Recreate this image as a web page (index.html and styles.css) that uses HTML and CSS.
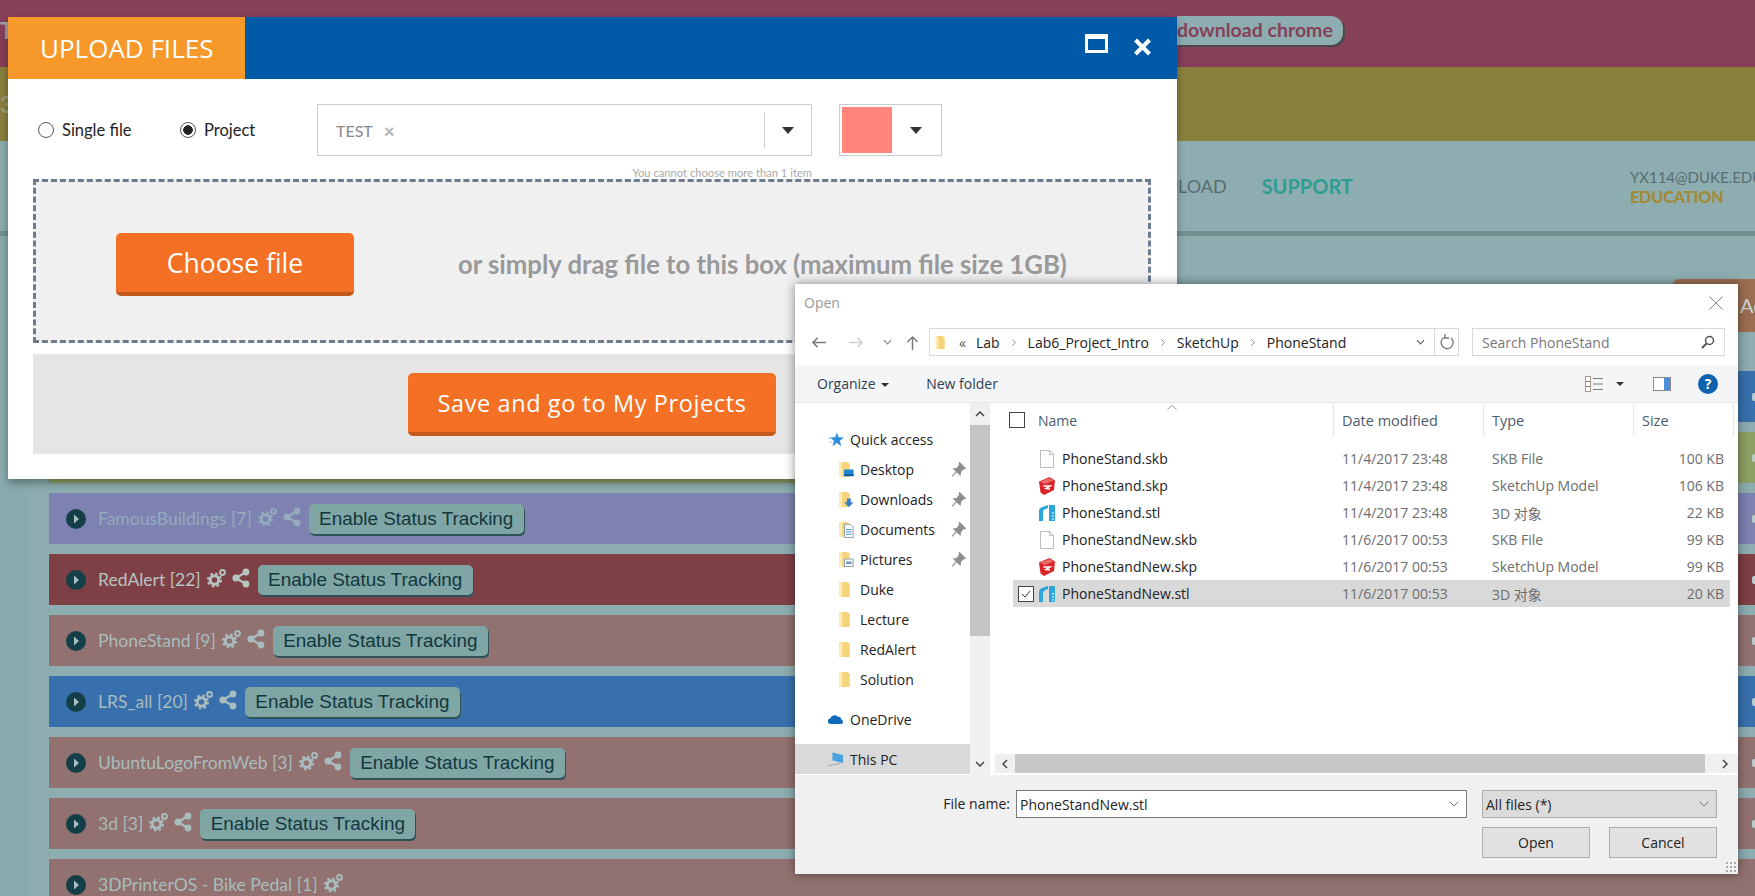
FILE: index.html
```html
<!DOCTYPE html>
<html lang="en">
<head>
<meta charset="UTF-8" />
<title>Upload Files</title>
<link rel="stylesheet" href="styles.css">
</head>
<body>

<svg class="sprites" width="0" height="0">
  <symbol id="i-play" viewBox="0 0 20 20"><circle cx="10" cy="10" r="10" fill="#143f48"/><path d="M8 5.500l5 4.500-5 4.500z" fill="#a9c0c2"/></symbol>
  <symbol id="i-gear" viewBox="0 0 20 20"><g fill="none" stroke="currentColor"><circle cx="7.500" cy="12" r="4.300" stroke-width="3"/><circle cx="7.500" cy="12" r="6.500" stroke-width="2" stroke-dasharray="2.600 2.500"/><circle cx="15.500" cy="4.500" r="2.400" stroke-width="2"/></g></symbol>
  <symbol id="i-share" viewBox="0 0 18 20"><path d="M14 4L4 10l10 6" fill="none" stroke="currentColor" stroke-width="2.400"/><circle cx="14" cy="4" r="3.400" fill="currentColor"/><circle cx="4" cy="10" r="3.600" fill="currentColor"/><circle cx="14" cy="16" r="3.400" fill="currentColor"/></symbol>
  <symbol id="i-folder" viewBox="0 0 16 18"><path d="M1 1h8l3 2v14H1z" fill="#f6d47c"/><path d="M1 1h3v16H1z" fill="#fdeab4"/></symbol>
  <symbol id="i-desktop" viewBox="0 0 16 18"><use href="#i-folder"/><rect x="6" y="9" width="10" height="7" fill="#1a86d0"/><rect x="6" y="14" width="10" height="2" fill="#0e5e9e"/></symbol>
  <symbol id="i-downloads" viewBox="0 0 16 18"><use href="#i-folder"/><path d="M9 8h4v4h3l-5 5-5-5h3z" fill="#2f80c8"/></symbol>
  <symbol id="i-documents" viewBox="0 0 16 18"><use href="#i-folder"/><path d="M6.500 3.500h6l3 3v11h-9z" fill="#fff" stroke="#8a9aa8"/><path d="M8 9h6M8 11.500h6M8 14h6" stroke="#3b8ed0"/></symbol>
  <symbol id="i-pictures" viewBox="0 0 16 18"><use href="#i-folder"/><rect x="6.500" y="8.500" width="9" height="8" fill="#fff" stroke="#8a9aa8"/><rect x="8" y="11" width="6" height="3" fill="#7a9cc0"/></symbol>
  <symbol id="i-file" viewBox="0 0 16 18"><path d="M1.500.5h9l4 4v13h-13z" fill="#fff" stroke="#bcbcbc"/><path d="M10.500.5v4h4" fill="none" stroke="#bcbcbc"/></symbol>
  <symbol id="i-skp" viewBox="0 0 16 18"><path d="M0 4.500L10.500 0 16 3.500 15 13 5 18 1.500 15.500z" fill="#d9252a"/><path d="M1 4.500L10.500 1l4 2.500-9 3.500z" fill="#ee6a68"/><path d="M4.500 9H11L7 11.500l4 .5" fill="none" stroke="#fff" stroke-width="1.500"/></symbol>
  <symbol id="i-stl" viewBox="0 0 16 18"><path d="M0 17V7Q0 4 3 3l6-2v3L5.500 5.500Q4 6 4 8v9z" fill="#2aa7de"/><path d="M10 1h5q1 0 1 1v15h-6z" fill="#2aa7de"/><path d="M13 9h2M13 12h2M13 15h2" stroke="#fff"/></symbol>
  <symbol id="i-pin" viewBox="0 0 14 14"><path d="M8 .5l5.500 5.500-2 .5-2.500 2.500-.5 3L2.500 6.500l3-.5 2-2.500zM5 9l-4 4.500" fill="#8e8e8e" stroke="#8e8e8e"/></symbol>
  <symbol id="i-chev" viewBox="0 0 8 10"><path d="M2 1l4 4-4 4" fill="none" stroke="#8a8a8a" stroke-width="1.300"/></symbol>
</svg>

<div class="page">
  <div class="band-top">
    <span class="band-letter">T</span>
    <a class="pill">download chrome</a>
  </div>
  <div class="band-olive"><span class="band-letter">3</span></div>
  <nav class="site-nav">
    <a>UPLOAD</a>
    <a class="nav-support">SUPPORT</a>
    <div class="nav-user">
      <div>YX114@DUKE.EDU</div>
      <div class="nav-plan">EDUCATION</div>
    </div>
  </nav>
  <div class="content">
    <div class="side"></div>
    <div class="projects">
      <div class="projects-head"><a class="add-btn">Add</a></div>
      <div class="row row-blue"><span class="row-end"></span></div>
      <div class="row row-green"><span class="row-end"></span></div>
      <div class="row row-purple">
        <svg class="ic-play"><use href="#i-play"/></svg>
        <span class="row-name">FamousBuildings [7]</span>
        <svg class="ic-gear"><use href="#i-gear"/></svg>
        <svg class="ic-share"><use href="#i-share"/></svg>
        <button class="track">Enable Status Tracking</button>
        <span class="row-end"></span>
      </div>
      <div class="row row-red">
        <svg class="ic-play"><use href="#i-play"/></svg>
        <span class="row-name">RedAlert [22]</span>
        <svg class="ic-gear"><use href="#i-gear"/></svg>
        <svg class="ic-share"><use href="#i-share"/></svg>
        <button class="track">Enable Status Tracking</button>
        <span class="row-end"></span>
      </div>
      <div class="row row-brown">
        <svg class="ic-play"><use href="#i-play"/></svg>
        <span class="row-name">PhoneStand [9]</span>
        <svg class="ic-gear"><use href="#i-gear"/></svg>
        <svg class="ic-share"><use href="#i-share"/></svg>
        <button class="track">Enable Status Tracking</button>
        <span class="row-end"></span>
      </div>
      <div class="row row-blue">
        <svg class="ic-play"><use href="#i-play"/></svg>
        <span class="row-name">LRS_all [20]</span>
        <svg class="ic-gear"><use href="#i-gear"/></svg>
        <svg class="ic-share"><use href="#i-share"/></svg>
        <button class="track">Enable Status Tracking</button>
        <span class="row-end"></span>
      </div>
      <div class="row row-brown">
        <svg class="ic-play"><use href="#i-play"/></svg>
        <span class="row-name">UbuntuLogoFromWeb [3]</span>
        <svg class="ic-gear"><use href="#i-gear"/></svg>
        <svg class="ic-share"><use href="#i-share"/></svg>
        <button class="track">Enable Status Tracking</button>
        <span class="row-end"></span>
      </div>
      <div class="row row-brown">
        <svg class="ic-play"><use href="#i-play"/></svg>
        <span class="row-name">3d [3]</span>
        <svg class="ic-gear"><use href="#i-gear"/></svg>
        <svg class="ic-share"><use href="#i-share"/></svg>
        <button class="track">Enable Status Tracking</button>
        <span class="row-end"></span>
      </div>
      <div class="row row-brown">
        <svg class="ic-play"><use href="#i-play"/></svg>
        <span class="row-name">3DPrinterOS - Bike Pedal [1]</span>
        <svg class="ic-gear"><use href="#i-gear"/></svg>
      </div>
    </div>
  </div>
</div>

<!-- upload modal -->
<section class="modal">
  <header class="modal-head">
    <h1 class="modal-title">UPLOAD FILES</h1>
    <div class="modal-tools">
      <span class="tool-max"></span>
      <svg class="tool-close" viewBox="0 0 19 18"><path d="M2.500 2l14 14M16.500 2l-14 14" stroke="#fff" stroke-width="4"/></svg>
    </div>
  </header>
  <div class="modal-body">
    <div class="form-row">
      <label class="radio-label"><input class="radio" type="radio" name="kind">Single file</label>
      <label class="radio-label label-project"><input class="radio" type="radio" name="kind" checked>Project</label>
      <div class="picker">
        <span class="picker-value">TEST</span>
        <span class="picker-x">×</span>
        <span class="picker-caret"><i class="caret"></i></span>
      </div>
      <div class="color-pick">
        <span class="swatch"></span>
        <i class="caret"></i>
      </div>
    </div>
    <div class="hint">You cannot choose more than 1 item</div>
    <div class="dropzone">
      <button class="btn-orange btn-choose">Choose file</button>
      <span class="drop-text">or simply drag file to this box (maximum file size 1GB)</span>
    </div>
    <div class="modal-foot">
      <button class="btn-orange btn-save">Save and go to My Projects</button>
    </div>
  </div>
</section>

<!-- windows file dialog -->
<section class="dialog">
  <div class="dlg-title">
    <span>Open</span>
    <svg class="dlg-close" viewBox="0 0 14 14"><path d="M.5.5l13 13M13.500.5l-13 13" stroke="#8a8a8a" fill="none"/></svg>
  </div>
  <div class="dlg-address">
    <svg class="addr-nav" viewBox="0 0 16 14"><path d="M16 7H2M7 2L2 7l5 5" fill="none" stroke="#7a7a7a" stroke-width="1.600"/></svg>
    <svg class="addr-nav addr-fwd" viewBox="0 0 16 14"><path d="M0 7h14M9 2l5 5-5 5" fill="none" stroke="#cfcfcf" stroke-width="1.600"/></svg>
    <svg class="addr-down" viewBox="0 0 10 6"><path d="M1 1l4 4 4-4" fill="none" stroke="#8a8a8a" stroke-width="1.300"/></svg>
    <svg class="addr-up" viewBox="0 0 14 16"><path d="M7 16V2M1.500 7.500L7 2l5.500 5.500" fill="none" stroke="#7a7a7a" stroke-width="1.600"/></svg>
    <div class="addr-box">
      <svg class="addr-folder"><use href="#i-folder"/></svg>
      <span class="crumb-more">«</span>
      <span>Lab</span><svg class="chev"><use href="#i-chev"/></svg>
      <span>Lab6_Project_Intro</span><svg class="chev"><use href="#i-chev"/></svg>
      <span>SketchUp</span><svg class="chev"><use href="#i-chev"/></svg>
      <span>PhoneStand</span>
      <svg class="addr-drop" viewBox="0 0 10 6"><path d="M1 1l4 4 4-4" fill="none" stroke="#666" stroke-width="1.300"/></svg>
      <span class="addr-refresh">
        <svg viewBox="0 0 14 16" width="14" height="16"><path d="M5 3a6 6 0 1 0 6 1M5 0v4h4" fill="none" stroke="#777" stroke-width="1.300"/></svg>
      </span>
    </div>
    <div class="search-box">
      <span>Search PhoneStand</span>
      <svg viewBox="0 0 14 14" width="14" height="14"><circle cx="8.500" cy="5.500" r="4" fill="none" stroke="#555" stroke-width="1.500"/><path d="M5.500 8.500L1 13" stroke="#555" stroke-width="2"/></svg>
    </div>
  </div>
  <div class="dlg-toolbar">
    <span class="tb-item">Organize <i class="mini-caret"></i></span>
    <span class="tb-item tb-new">New folder</span>
    <svg class="tb-views" viewBox="0 0 18 16"><rect x=".5" y=".5" width="5" height="15" fill="#fff" stroke="#a89a88"/><path d="M1 5.500h4M1 10.500h4M8 2.500h10M8 8h10M8 13.500h10" stroke="#7b7b7b"/></svg>
    <i class="mini-caret tb-caret"></i>
    <svg class="tb-pane" viewBox="0 0 18 14"><rect x=".5" y=".5" width="17" height="13" fill="#fff" stroke="#8c8c8c"/><rect x="11" y="1" width="6" height="12" fill="#4a90d9"/></svg>
    <span class="tb-help">?</span>
  </div>
  <div class="dlg-main">
    <ul class="tree">
      <li class="tree-top"><svg class="tree-ic" viewBox="0 0 18 16"><path d="M10 0l2 5.500 6 .3-4.700 3.700L15 15.500 10 12l-5 3.500 1.700-6L2 5.800l6-.3z" fill="#2f8fdc"/><path d="M0 7h5M1 11h4" stroke="#9cc8ec"/></svg>Quick access</li>
      <li><svg class="tree-ic"><use href="#i-desktop"/></svg>Desktop<svg class="pin"><use href="#i-pin"/></svg></li>
      <li><svg class="tree-ic"><use href="#i-downloads"/></svg>Downloads<svg class="pin"><use href="#i-pin"/></svg></li>
      <li><svg class="tree-ic"><use href="#i-documents"/></svg>Documents<svg class="pin"><use href="#i-pin"/></svg></li>
      <li><svg class="tree-ic"><use href="#i-pictures"/></svg>Pictures<svg class="pin"><use href="#i-pin"/></svg></li>
      <li><svg class="tree-ic"><use href="#i-folder"/></svg>Duke</li>
      <li><svg class="tree-ic"><use href="#i-folder"/></svg>Lecture</li>
      <li><svg class="tree-ic"><use href="#i-folder"/></svg>RedAlert</li>
      <li><svg class="tree-ic"><use href="#i-folder"/></svg>Solution</li>
      <li class="tree-top tree-gap"><svg class="tree-ic" viewBox="0 0 18 12"><path d="M3 11a3 3 0 0 1-.500-6A5 5 0 0 1 11 3a3.500 3.500 0 0 1 4 3 2.600 2.600 0 0 1 0 5z" fill="#0f6cbd"/></svg>OneDrive</li>
      <li class="tree-top tree-gap tree-sel"><svg class="tree-ic" viewBox="0 0 18 16"><path d="M5 0l12 3v9L5 9z" fill="#4aa3e0"/><path d="M0 15l14-2.500" stroke="#999"/></svg>This PC</li>
    </ul>
    <div class="vscroll">
      <svg class="sb-arrow" viewBox="0 0 10 6"><path d="M1 5l4-4 4 4" fill="none" stroke="#444" stroke-width="1.500"/></svg>
      <div class="vscroll-thumb"></div>
      <svg class="sb-arrow sb-bottom" viewBox="0 0 10 6"><path d="M1 1l4 4 4-4" fill="none" stroke="#444" stroke-width="1.500"/></svg>
    </div>
    <div class="files">
      <div class="files-head">
        <div class="col-name"><span class="box"></span>Name<svg class="sort-up" viewBox="0 0 10 5"><path d="M.5 4.500L5 .5l4.500 4" fill="none" stroke="#999"/></svg></div>
        <div>Date modified</div>
        <div>Type</div>
        <div>Size</div>
      </div>
      <div class="file-list">
        <div class="file"><div class="file-name"><span class="slot"></span><svg class="file-ic"><use href="#i-file"/></svg>PhoneStand.skb</div><div>11/4/2017 23:48</div><div>SKB File</div><div class="file-size">100 KB</div></div>
        <div class="file"><div class="file-name"><span class="slot"></span><svg class="file-ic"><use href="#i-skp"/></svg>PhoneStand.skp</div><div>11/4/2017 23:48</div><div>SketchUp Model</div><div class="file-size">106 KB</div></div>
        <div class="file"><div class="file-name"><span class="slot"></span><svg class="file-ic"><use href="#i-stl"/></svg>PhoneStand.stl</div><div>11/4/2017 23:48</div><div>3D 对象</div><div class="file-size">22 KB</div></div>
        <div class="file"><div class="file-name"><span class="slot"></span><svg class="file-ic"><use href="#i-file"/></svg>PhoneStandNew.skb</div><div>11/6/2017 00:53</div><div>SKB File</div><div class="file-size">99 KB</div></div>
        <div class="file"><div class="file-name"><span class="slot"></span><svg class="file-ic"><use href="#i-skp"/></svg>PhoneStandNew.skp</div><div>11/6/2017 00:53</div><div>SketchUp Model</div><div class="file-size">99 KB</div></div>
        <div class="file file-sel"><div class="file-name"><span class="slot box"><svg viewBox="0 0 14 14" width="14" height="14"><path d="M3 7l3 3 5-6" fill="none" stroke="#333"/></svg></span><svg class="file-ic"><use href="#i-stl"/></svg>PhoneStandNew.stl</div><div>11/6/2017 00:53</div><div>3D 对象</div><div class="file-size">20 KB</div></div>
      </div>
      <div class="hscroll">
        <svg class="hs-arrow" viewBox="0 0 6 10"><path d="M5 1L1 5l4 4" fill="none" stroke="#444" stroke-width="1.500"/></svg>
        <div class="hscroll-thumb"></div>
        <svg class="hs-arrow hs-right" viewBox="0 0 6 10"><path d="M1 1l4 4-4 4" fill="none" stroke="#444" stroke-width="1.500"/></svg>
      </div>
    </div>
  </div>
  <div class="dlg-foot">
    <label class="fn-label">File name:</label>
    <div class="fn-input">PhoneStandNew.stl<svg viewBox="0 0 10 6" width="10" height="6"><path d="M.5.5L5 5 9.500.5" fill="none" stroke="#777"/></svg></div>
    <div class="fn-type">All files (*)<svg viewBox="0 0 10 6" width="10" height="6"><path d="M.5.5L5 5 9.500.5" fill="none" stroke="#777"/></svg></div>
    <div class="fn-btns">
      <button class="win-btn">Open</button>
      <button class="win-btn">Cancel</button>
    </div>
    <span class="grip"></span>
  </div>
</section>

</body>
</html>
```

FILE: styles.css
```css
html, body {
  margin: 0;
  height: 896px;
  overflow: hidden;
}
body {
  font-family: Lato, 'Open Sans', sans-serif;
  background: #8dadb0;
  color: #333;
  position: relative;
  width: 1755px;
}
button {
  font-family: inherit;
  cursor: pointer;
}
.sprites {
  position: absolute;
}

/* dimmed page behind the modal */
.band-top {
  height: 67px;
  background: #864059;
  display: flex;
  align-items: flex-start;
}
.band-letter {
  font-size: 22px;
  font-weight: bold;
  color: #a5a5a5;
  line-height: 22px;
  margin-top: 20px;
  width: 12px;
  flex: none;
}
.pill {
  margin: 16px 0 0 1165px;
  width: 166px;
  height: 29px;
  line-height: 27px;
  text-align: right;
  padding-right: 11px;
  box-sizing: border-box;
  background: #8dadb0;
  color: #864059;
  font-size: 19.500px;
  font-weight: bold;
  border-radius: 0 12px 12px 0;
  box-shadow: 2px 2px 0 #4a4750;
  white-space: nowrap;
}
.band-olive {
  height: 74px;
  background: #8a803e;
  display: flex;
}
.band-olive .band-letter {
  color: #9c9c7a;
  margin-top: 27px;
}
.site-nav {
  height: 90px;
  border-bottom: 5px solid #72908f;
  display: flex;
  align-items: center;
  padding-left: 1154px;
  font-size: 18px;
  color: #5a6c70;
}
.nav-support {
  margin-left: 35px;
  color: #2f9d94;
  font-weight: bold;
  font-size: 20px;
}
.nav-user {
  margin-left: 277px;
  font-size: 15px;
  line-height: 20px;
  white-space: nowrap;
  margin-top: 2px;
}
.nav-plan {
  color: #a38a35;
  font-weight: 900;
  font-size: 16px;
}
.content {
  display: flex;
  height: 660px;
}
.side {
  width: 30px;
  background: #8aabae;
  flex: none;
}
.projects {
  flex: 1;
  padding: 43px 0 0 19px;
  min-width: 0;
}
.projects-head {
  height: 53px;
  margin-bottom: 39px;
  display: flex;
  justify-content: flex-end;
}
.add-btn {
  width: 83px;
  background: #9c6d50;
  color: #c9d4d2;
  font-size: 20px;
  line-height: 53px;
  border-radius: 8px 0 0 8px;
  padding-left: 68px;
  box-sizing: border-box;
  white-space: nowrap;
  overflow: hidden;
}
.row {
  height: 51px;
  margin-bottom: 10px;
  display: flex;
  align-items: center;
  padding-left: 17px;
  color: #a9bcbe;
}
.row-blue { background: #3870ad; }
.row-green { background: #8ea164; }
.row-purple { background: #7d82b0; color: #93abbd; }
.row-red { background: #7e3f45; color: #b6c4c2; }
.row-brown { background: #917270; }
.ic-play {
  width: 20px;
  height: 20px;
  flex: none;
}
.row-name {
  margin-left: 12px;
  font-size: 17.500px;
  white-space: nowrap;
}
.ic-gear {
  width: 20px;
  height: 20px;
  margin: -4px 0 0 6px;
  flex: none;
}
.ic-share {
  width: 18px;
  height: 20px;
  margin: -4px 0 0 5px;
  flex: none;
}
.track {
  margin: 1px 0 0 8px;
  width: 215px;
  height: 30px;
  padding: 0;
  border: none;
  border-radius: 5px;
  background: #7fa5a5;
  color: #12383e;
  font-family: 'Liberation Sans', sans-serif;
  font-size: 18.900px;
  box-shadow: 1px 2px 0 #2e5257;
  white-space: nowrap;
}
.row-end {
  margin-left: auto;
  width: 3px;
  height: 8px;
  background: #b9cccc;
  border-radius: 2px 0 0 2px;
}

/* upload modal */
.modal {
  position: absolute;
  left: 8px;
  top: 17px;
  width: 1169px;
  height: 462px;
  background: #fff;
  box-shadow: 0 4px 8px rgba(0, 0, 0, 0.35);
}
.modal-head {
  height: 62px;
  background: #005aa7;
  display: flex;
}
.modal-title {
  margin: 0;
  width: 237px;
  background: #f7982a;
  color: #fff;
  font-family: 'Open Sans', sans-serif;
  font-weight: 400;
  font-size: 26px;
  line-height: 62px;
  padding-left: 32px;
  box-sizing: border-box;
  white-space: nowrap;
}
.modal-tools {
  margin-left: auto;
  display: flex;
  align-items: flex-start;
  padding-right: 25px;
}
.tool-max {
  width: 23px;
  height: 19px;
  box-sizing: border-box;
  border: 3px solid #fff;
  border-top-width: 5px;
  margin-top: 17px;
}
.tool-close {
  width: 19px;
  height: 18px;
  margin: 21px 0 0 25px;
}
.modal-body {
  padding: 25px 26px 0 25px;
}
.form-row {
  height: 52px;
  display: flex;
  align-items: center;
}
.radio-label {
  display: flex;
  align-items: center;
  gap: 8px;
  margin-left: 5px;
  font-size: 16.500px;
  color: #222;
  margin-top: -1px;
  width: 93px;
  white-space: nowrap;
}
.label-project {
  margin-left: 49px;
  width: 73px;
}
.radio {
  appearance: none;
  margin: 0;
  width: 16px;
  height: 16px;
  border: 1px solid #555;
  border-radius: 50%;
  background: #fff;
  flex: none;
}
.radio:checked {
  background: radial-gradient(circle, #222 0 4.500px, #fff 5px);
}
.picker {
  margin-left: 64px;
  width: 495px;
  height: 52px;
  box-sizing: border-box;
  border: 1px solid #ccc;
  display: flex;
  align-items: center;
  padding-left: 18px;
  color: #888;
  font-size: 16px;
}
.picker-x {
  margin-left: 11px;
  color: #b5b5b5;
  font-weight: 900;
  font-size: 19px;
}
.picker-caret {
  margin-left: auto;
  width: 46px;
  height: 36px;
  border-left: 1px solid #ccc;
  display: flex;
  align-items: center;
  justify-content: center;
}
.caret {
  display: block;
  border-left: 6px solid transparent;
  border-right: 6px solid transparent;
  border-top: 7px solid #333;
}
.color-pick {
  margin-left: 27px;
  width: 103px;
  height: 52px;
  box-sizing: border-box;
  border: 1px solid #ccc;
  padding: 2px;
  display: flex;
  align-items: center;
}
.swatch {
  width: 50px;
  height: 46px;
  background: #ff857a;
  margin-right: 18px;
}
.hint {
  width: 779px;
  height: 23px;
  line-height: 33px;
  text-align: right;
  font-size: 11.200px;
  color: #aaa;
  white-space: nowrap;
}
.dropzone {
  height: 164px;
  box-sizing: border-box;
  border: 3px dashed #6d7b8f;
  background: #f0f0f1;
  display: flex;
  align-items: center;
  padding-left: 80px;
}
.btn-orange {
  height: 63px;
  border: none;
  border-bottom: 4px solid #c35a1d;
  border-radius: 5px;
  background: #f37024;
  color: #fff;
  font-family: 'Open Sans', sans-serif;
  padding: 2px 0 0;
}
.btn-choose {
  width: 238px;
  font-size: 26.500px;
  margin-top: 6px;
}
.drop-text {
  margin-left: 104px;
  font-size: 25.700px;
  font-weight: bold;
  color: #999;
  white-space: nowrap;
  margin-top: 5px;
}
.modal-foot {
  margin-top: 11px;
  height: 100px;
  background: #e5e5e6;
  display: flex;
  align-items: center;
  padding-left: 375px;
}
.btn-save {
  width: 368px;
  font-size: 23.500px;
  letter-spacing: 0.600px;
}

/* windows open dialog */
.dialog {
  position: absolute;
  left: 795px;
  top: 284px;
  width: 943px;
  height: 590px;
  background: #fff;
  box-shadow: 0 0 10px rgba(0, 0, 0, 0.45);
  font-family: 'Open Sans', 'Noto Sans CJK SC', sans-serif;
  font-size: 14px;
  color: #222;
  display: flex;
  flex-direction: column;
}
.dlg-title {
  height: 36px;
  flex: none;
  margin-bottom: 8px;
  display: flex;
  align-items: center;
  padding: 0 15px 0 9px;
  color: #999;
  font-size: 14px;
}
.dlg-close {
  margin-left: auto;
  width: 14px;
  height: 14px;
  margin-top: 2px;
}
.dlg-address {
  height: 28px;
  margin-bottom: 9px;
  flex: none;
  display: flex;
  align-items: center;
  padding-left: 16px;
}
.addr-nav {
  width: 15px;
  height: 13px;
  flex: none;
}
.addr-fwd {
  margin-left: 23px;
}
.addr-down {
  width: 9px;
  height: 6px;
  margin-left: 19px;
  flex: none;
}
.addr-up {
  width: 13px;
  height: 15px;
  margin-left: 14px;
  flex: none;
}
.addr-box {
  margin-left: 10px;
  width: 530px;
  height: 28px;
  box-sizing: border-box;
  border: 1px solid #d9d9d9;
  display: flex;
  align-items: center;
  padding-left: 5px;
  gap: 11px;
  white-space: nowrap;
  flex: none;
}
.addr-folder {
  width: 13px;
  height: 17px;
  flex: none;
}
.crumb-more {
  margin-right: -1px;
  color: #555;
}
.chev {
  width: 6px;
  height: 9px;
  flex: none;
}
.addr-drop {
  margin-left: auto;
  margin-right: -1px;
  width: 9px;
  height: 6px;
  flex: none;
}
.addr-refresh {
  width: 23px;
  height: 26px;
  border-left: 1px solid #d9d9d9;
  display: flex;
  align-items: center;
  justify-content: center;
  margin-left: -1px;
  flex: none;
}
.search-box {
  margin-left: 13px;
  width: 253px;
  height: 28px;
  box-sizing: border-box;
  border: 1px solid #d9d9d9;
  display: flex;
  align-items: center;
  justify-content: space-between;
  padding: 0 9px;
  color: #777;
  flex: none;
}
.dlg-toolbar {
  height: 38px;
  flex: none;
  background: #f3f5f7;
  border-bottom: 1px solid #e6e6e6;
  box-sizing: border-box;
  display: flex;
  align-items: center;
  padding-left: 22px;
  color: #2f3f52;
}
.tb-new {
  margin-left: 37px;
}
.mini-caret {
  display: inline-block;
  border-left: 4px solid transparent;
  border-right: 4px solid transparent;
  border-top: 4px solid #333;
  vertical-align: middle;
  margin-left: 2px;
}
.tb-views {
  width: 18px;
  height: 16px;
  margin-left: auto;
}
.tb-caret {
  margin-left: 13px;
}
.tb-pane {
  width: 18px;
  height: 14px;
  margin-left: 29px;
}
.tb-help {
  width: 20px;
  height: 20px;
  border-radius: 50%;
  margin: 0 20px 0 27px;
  background: #0f62ac;
  color: #fff;
  font-weight: bold;
  font-size: 14px;
  line-height: 20px;
  text-align: center;
}
.dlg-main {
  height: 372px;
  flex: none;
  display: flex;
}
.tree {
  list-style: none;
  margin: 0;
  padding: 21px 0 0 0;
  width: 175px;
  box-sizing: border-box;
  flex: none;
}
.tree li {
  height: 30px;
  display: flex;
  align-items: center;
  padding-left: 65px;
  white-space: nowrap;
}
.tree .tree-top {
  padding-left: 55px;
}
.tree .tree-gap {
  margin-top: 10px;
}
.tree .tree-sel {
  background: #d9d9d9;
}
.tree-ic {
  width: 16px;
  height: 17px;
  margin-left: -22px;
  margin-right: 6px;
  flex: none;
}
.pin {
  width: 15px;
  height: 15px;
  margin-left: auto;
  margin-right: 4px;
  flex: none;
}
.vscroll {
  width: 20px;
  flex: none;
  background: #f0f0f0;
  display: flex;
  flex-direction: column;
  align-items: center;
  height: 372px;
}
.sb-arrow {
  width: 10px;
  height: 6px;
  margin: 8px 0;
  flex: none;
}
.vscroll-thumb {
  width: 100%;
  height: 211px;
  background: #c4c4c4;
  flex: none;
}
.sb-bottom {
  margin-top: auto;
}
.files {
  flex: 1;
  display: flex;
  flex-direction: column;
  min-width: 0;
}
.files-head {
  height: 33px;
  margin-left: 23px;
  display: grid;
  grid-template-columns: 321px 150px 150px 100px;
  color: #4c5c6c;
  flex: none;
}
.files-head > div {
  border-right: 1px solid #e5e5e5;
  padding-left: 8px;
  display: flex;
  align-items: center;
  margin-top: 1px;
  position: relative;
  font-size: 14.500px;
}
.files-head .col-name {
  padding-left: 0;
  font-size: 14px;
}
.box {
  width: 16px;
  height: 16px;
  box-sizing: border-box;
  border: 1px solid #444;
  background: #fff;
  flex: none;
  display: flex;
  align-items: center;
  justify-content: center;
}
.col-name .box {
  margin: 0 13px 0 -4px;
}
.sort-up {
  position: absolute;
  left: 154px;
  top: 1px;
  width: 10px;
  height: 5px;
}
.file-list {
  margin: 9px 8px 0 23px;
  flex: 1;
}
.file {
  height: 27px;
  display: grid;
  grid-template-columns: 321px 150px 150px 96px;
  align-items: center;
  color: #6d6d6d;
}
.file > div {
  padding-left: 8px;
}
.file .file-name {
  padding-left: 5px;
  display: flex;
  align-items: center;
  color: #222;
}
.file .file-size {
  text-align: right;
  padding-right: 6px;
}
.file-sel {
  background: #d9d9d9;
}
.slot {
  width: 16px;
  height: 16px;
  margin-right: 5px;
  flex: none;
}
.file-ic {
  width: 16px;
  height: 18px;
  margin-right: 7px;
  flex: none;
}
.hscroll {
  height: 19px;
  margin: 0 0 2px 5px;
  background: #f0f0f0;
  display: flex;
  align-items: center;
  flex: none;
}
.hs-arrow {
  width: 6px;
  height: 10px;
  margin: 0 7px;
  flex: none;
}
.hscroll-thumb {
  width: 690px;
  height: 100%;
  background: #c8c8c8;
  flex: none;
}
.hs-right {
  margin-left: 17px;
}
.dlg-foot {
  flex: 1;
  background: #f0f0f0;
  display: grid;
  grid-template-columns: 221px 451px 15px 235px;
  grid-template-rows: 28px 31px;
  row-gap: 9px;
  padding-top: 15px;
  box-sizing: border-box;
  position: relative;
}
.fn-label {
  text-align: right;
  line-height: 28px;
  margin-right: 6px;
}
.fn-input {
  grid-column: 2;
  border: 1px solid #7a7a7a;
  background: #fff;
  box-sizing: border-box;
  display: flex;
  align-items: center;
  justify-content: space-between;
  padding: 0 7px 0 3px;
}
.fn-type {
  grid-column: 4;
  border: 1px solid #adadad;
  background: #dcdcdc;
  box-sizing: border-box;
  display: flex;
  align-items: center;
  justify-content: space-between;
  padding: 0 7px 0 3px;
}
.fn-btns {
  grid-column: 4;
  grid-row: 2;
  display: flex;
  justify-content: space-between;
}
.win-btn {
  width: 108px;
  height: 31px;
  border: 1px solid #adadad;
  background: #e1e1e1;
  font-family: 'Open Sans', sans-serif;
  font-size: 14px;
  color: #222;
  padding: 0;
}
.grip {
  position: absolute;
  right: 2px;
  bottom: 2px;
  width: 11px;
  height: 11px;
  background: radial-gradient(circle, #aaa 1px, transparent 1.200px) 0 0 / 4px 4px;
}
```
